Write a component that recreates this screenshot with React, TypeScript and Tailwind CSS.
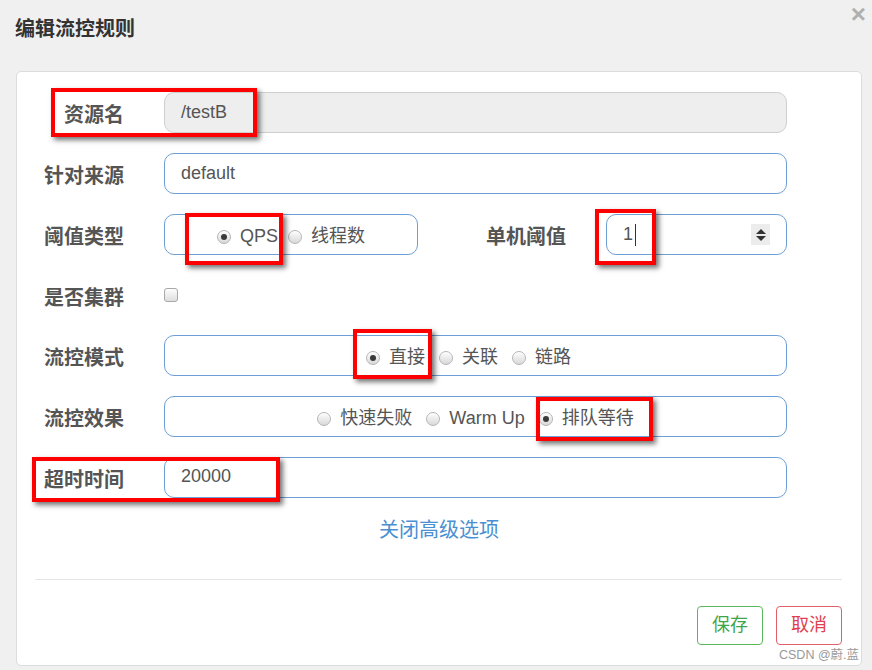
const font = "font-['Liberation_Sans','Noto_Sans_CJK_SC',sans-serif]";

function Radio({ checked, label }: { checked?: boolean; label: string }) {
  return (
    <span className="flex items-center gap-[9px]">
      <span className="flex h-[14px] w-[14px] items-center justify-center rounded-full border border-[#b5b5b5] bg-[linear-gradient(#fdfdfd,#d9d9d9)] shadow-[inset_0_1px_1px_rgba(255,255,255,0.8)]">
        {checked && <span className="h-[6px] w-[6px] rounded-full bg-[#3a3a3a]" />}
      </span>
      <span>{label}</span>
    </span>
  );
}

function Row({
  label,
  children,
  h = "h-[41px]",
}: {
  label: string;
  children: React.ReactNode;
  h?: string;
}) {
  return (
    <div className={`flex ${h} items-center`}>
      <div className="w-[107px] pt-[5px] text-right text-[20px] font-bold text-[#555]">
        {label}
      </div>
      <div className="ml-[40px] flex h-full flex-1 items-center">{children}</div>
    </div>
  );
}

const boxCls =
  "flex h-full w-full items-center rounded-[10px] border border-[#6d9fd6] bg-white px-[16px] text-[18px] text-[#555]";

// red annotation frames drawn over the form
const marks = [
  "left-[51px] top-[88px] w-[206px] h-[49px]",
  "left-[185px] top-[213px] w-[98px] h-[52px]",
  "left-[595px] top-[209px] w-[61px] h-[56px]",
  "left-[353px] top-[329px] w-[79px] h-[50px]",
  "left-[536px] top-[397px] w-[117px] h-[44px]",
  "left-[32px] top-[457px] w-[248px] h-[45px]",
];

export default function App() {
  return (
    <div className={`relative h-[670px] w-[872px] overflow-hidden bg-[#f0f0f0] ${font}`}>
      <div className="flex h-[71px] items-start justify-between">
        <h1 className="ml-[15px] mt-[15px] text-[20px] font-bold leading-[28px] text-[#333]">
          编辑流控规则
        </h1>
        <span className="mr-[6px] mt-[1px] text-[26px] font-bold leading-[26px] text-[#b0b0b0]">
          ×
        </span>
      </div>

      <div className="ml-[16px] flex h-[595px] w-[846px] flex-col rounded-[5px] border border-[#dcdcdc] bg-white pr-[74px] pt-[20px]">
        <div className="flex flex-col gap-[20px]">
          <Row label="资源名">
            <div className="flex h-full w-full items-center rounded-[10px] border border-[#cfcfcf] bg-[#eeeeee] px-[16px] text-[18px] text-[#555]">
              /testB
            </div>
          </Row>
          <Row label="针对来源">
            <div className={boxCls}>default</div>
          </Row>
          <Row label="阈值类型">
            <div className="flex h-full w-[254px] items-center justify-center gap-[10px] rounded-[10px] border border-[#6d9fd6] pt-[4px] text-[18px] text-[#555]">
              <Radio checked label="QPS" />
              <Radio label="线程数" />
            </div>
            <div className="flex-1 pt-[5px] text-right text-[20px] font-bold text-[#555]">
              单机阈值
            </div>
            <div className="ml-[40px] flex h-full w-[181px] items-center justify-between rounded-[10px] border border-[#6d9fd6] pl-[16px] pr-[16px] text-[18px] text-[#555]">
              <span className="flex items-center">
                1<span className="ml-[2px] h-[22px] w-px bg-[#333]" />
              </span>
              <span className="flex h-[21px] w-[19px] flex-col items-center justify-center gap-[2px] bg-[#ececec]">
                <span className="h-0 w-0 border-x-[5px] border-b-[5px] border-x-transparent border-b-[#333]" />
                <span className="h-0 w-0 border-x-[5px] border-t-[5px] border-x-transparent border-t-[#333]" />
              </span>
            </div>
          </Row>
          <Row label="是否集群" h="h-[40px]">
            <span className="h-[14px] w-[14px] rounded-[3px] border border-[#a8a8a8] bg-[linear-gradient(#fdfdfd,#dedede)]" />
          </Row>
          <Row label="流控模式">
            <div className={`${boxCls} justify-center gap-[14px] pr-[30px] pt-[4px]`}>
              <Radio checked label="直接" />
              <Radio label="关联" />
              <Radio label="链路" />
            </div>
          </Row>
          <Row label="流控效果">
            <div className={`${boxCls} justify-center gap-[14px] pt-[4px]`}>
              <Radio label="快速失败" />
              <Radio label="Warm Up" />
              <Radio checked label="排队等待" />
            </div>
          </Row>
          <Row label="超时时间">
            <div className={`${boxCls} pb-[2px]`}>20000</div>
          </Row>
        </div>

        <div className="ml-[74px] mt-[18px] text-center text-[20px] leading-[28px] text-[#4a8fd2]">
          关闭高级选项
        </div>

        <div className="ml-[18px] mr-[-55px] mt-[35px] h-px bg-[#e5e5e5]" />

        <div className="mr-[-55px] mt-[26px] flex justify-end gap-[13px]">
          <button className="h-[39px] w-[66px] rounded-[4px] border border-[#5cb85c] text-[18px] text-[#3fa648]">
            保存
          </button>
          <button className="h-[39px] w-[66px] rounded-[4px] border border-[#e0606a] text-[18px] text-[#e0404e]">
            取消
          </button>
        </div>
      </div>

      {marks.map((m) => (
        <div
          key={m}
          className={`pointer-events-none absolute ${m} border-[4px] border-[#ff0000] shadow-[3px_3px_5px_rgba(0,0,0,0.55)]`}
        />
      ))}

      <div className="absolute left-[779px] top-[647px] text-[12.5px] leading-[16px] text-[#9a9a9a]">
        CSDN @蔚.蓝
      </div>
    </div>
  );
}
